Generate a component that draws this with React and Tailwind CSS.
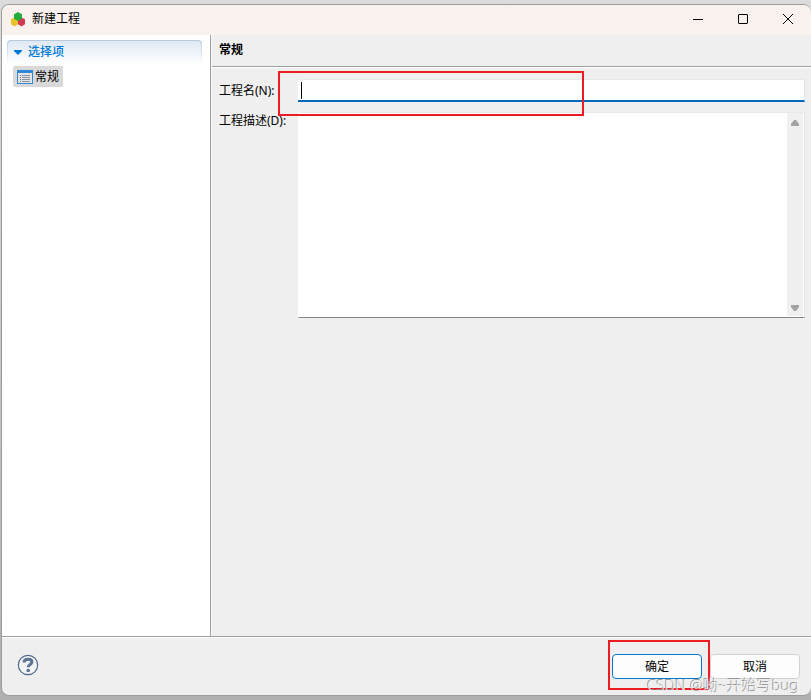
import React, { useState } from 'react'

const App = () => {
  return (
    <div className="flex h-screen min-h-96 flex-col bg-gradient-to-b from-[#dcdcdc] to-[#b0b0b0] pt-1 pb-1 pl-px font-['Noto_Sans','Noto_Sans_CJK_SC',sans-serif] text-xs text-black">
      <div className="flex flex-1 flex-col overflow-hidden rounded-lg border border-r-0 border-[#9c9c9c] bg-[#efefef]">
        <TitleBar title="新建工程" />
        <div className="flex flex-1">
          <Sidebar />
          <GeneralForm />
        </div>
        <Footer />
      </div>
    </div>
  )
}

export default App

const TitleBar = ({ title }) => {
  return (
    <header className="flex h-[30px] items-center bg-[#f9f1ee] pb-0.5 pl-2">
      <svg className="h-4 w-4" viewBox="0 0 16 16" aria-hidden="true">
        <path d="M4.500 6.500L8 8.200v5L4.500 15.500 1 13.200v-5z" fill="#e8c02a" />
        <path d="M11.500 6.500L15 8.200v5l-3.500 2.300L8 13.200v-5z" fill="#d23b51" />
        <path d="M8 1l4 2.200v4.600L8 10 4 7.800V3.200z" fill="#22ad3c" />
      </svg>
      <h1 className="ml-1.5 flex-1 leading-4">{title}</h1>
      <button aria-label="最小化" className="flex h-full w-[45px] items-center justify-center">
        <svg className="h-3 w-3" viewBox="0 0 12 12" stroke="#000">
          <path d="M1 6.500h10" />
        </svg>
      </button>
      <button aria-label="最大化" className="flex h-full w-[45px] items-center justify-center">
        <svg className="h-3 w-3" viewBox="0 0 12 12" fill="none" stroke="#000">
          <rect x="1.500" y="1.500" width="9" height="9" rx="0.500" />
        </svg>
      </button>
      <button aria-label="关闭" className="flex h-full w-[46px] items-center justify-center">
        <svg className="h-3 w-3" viewBox="0 0 12 12" stroke="#000">
          <path d="M1 1l10 10M11 1L1 11" />
        </svg>
      </button>
    </header>
  )
}

const Sidebar = () => {
  const [open, setOpen] = useState(true)
  return (
    <nav className="w-[209px] border-r border-[#a0a0a0] bg-white px-[5px] pt-[5px]">
      <div className="mr-[3px] rounded-t bg-gradient-to-b from-[#b5c8dc] to-white p-px">
        <button
          onClick={() => setOpen(!open)}
          className="flex h-[23px] w-full items-center rounded-t-sm bg-gradient-to-b from-[#dfe8f3] to-white pb-0.5 pl-1.5 text-[#0078d7]"
        >
          <svg className="h-2 w-2" viewBox="0 0 8 8" fill="#0078d7">
            <path d="M0 2h8v1L4 7 0 3z" />
          </svg>
          <span className="ml-1.5 font-medium leading-4">选择项</span>
        </button>
      </div>
      {open && (
        <button className="mt-px ml-1.5 flex h-[21px] w-[50px] items-center rounded-xs bg-[#d9d9d9] pl-1">
          <svg className="h-4 w-4 shrink-0" viewBox="0 0 16 16" aria-hidden="true">
            <rect x="0.500" y="1.500" width="15" height="13" fill="#e4e4e4" stroke="#2f87d8" />
            <path d="M0 1h16v3H0z" fill="#2f87d8" />
            <path d="M3 6.500h1M3 8.500h1M3 10.500h1M3 12.500h1" stroke="#68788a" />
            <path d="M5 6.500h8M5 8.500h8M5 10.500h8M5 12.500h8" stroke="#8795a3" />
          </svg>
          <span className="ml-0.5 shrink-0 leading-4">常规</span>
        </button>
      )}
    </nav>
  )
}

const GeneralForm = () => {
  return (
    <main className="flex-1 border-l border-[#f8f8f8]">
      <div className="flex h-8 items-center border-b border-[#a0a0a0] pb-0.5 pl-[7px]">
        <h2 className="font-bold leading-4">常规</h2>
      </div>
      <div className="border-t border-white pt-[11px] pr-1.5 pl-[7px]">
        <div className="relative flex">
          <label htmlFor="name" className="w-[79px] shrink-0 pt-1 leading-4">
            工程名(N):
          </label>
          <input
            id="name"
            type="text"
            className="h-[23px] min-w-0 flex-1 border-t border-r border-b-2 border-t-[#e8e8e8] border-r-[#dfe5ec] border-b-[#0067c0] bg-white px-1 outline-none"
          />
          <span className="absolute top-[3px] left-[82px] h-[17px] w-px bg-black"></span>
          <Highlight className="-top-2 left-[59px] h-[45px] w-[306px]" />
        </div>
        <div className="mt-2.5 flex">
          <label htmlFor="description" className="w-[79px] shrink-0 pt-px leading-4 whitespace-nowrap">
            工程描述(D):
          </label>
          <div className="flex h-[206px] min-w-0 flex-1 border border-t-[#e8e8e8] border-r-[#e4e4e4] border-b-[#868686] border-l-white bg-white">
            <textarea
              id="description"
              className="min-w-0 flex-1 resize-none bg-white p-1 outline-none"
            />
            <div className="mr-px mb-px flex w-4 flex-col items-center justify-between bg-[#f0f0f0] pt-1.5 pb-1">
              <button aria-label="向上滚动">
                <svg className="block h-2 w-2" viewBox="0 0 8 8" fill="#a3a3a3">
                  <path d="M3 1h2l3 4v2H0V5z" />
                </svg>
              </button>
              <button aria-label="向下滚动">
                <svg className="block h-2 w-2" viewBox="0 0 8 8" fill="#a3a3a3">
                  <path d="M0 1h8v2L5 7H3L0 3z" />
                </svg>
              </button>
            </div>
          </div>
        </div>
      </div>
    </main>
  )
}

const Footer = () => {
  return (
    <footer className="relative border-t border-[#a0a0a0]">
      <div className="flex h-[58px] items-center border-t border-white pr-[11px] pl-[15px]">
        <button aria-label="帮助" className="pb-1">
          <svg className="block h-[22px] w-[22px]" viewBox="0 0 22 22" fill="none">
            <circle cx="11" cy="11" r="9.700" fill="#f4f4f4" stroke="#566a8c" strokeWidth="1.200" />
            <path
              d="M7 8.400C7 6 8.700 5.200 11 5.200s3.900 1 3.900 2.900c0 2.500-3.700 2.300-3.700 5.200"
              stroke="#5b7196"
              strokeWidth="3"
            />
            <circle cx="11.200" cy="16.500" r="1.800" fill="#5b7196" />
          </svg>
        </button>
        <div className="relative ml-auto flex gap-2">
          <button className="h-[25px] w-[90px] rounded border border-[#0078d4] bg-[#fdfdfd] leading-4">
            确定
          </button>
          <button className="h-[25px] w-[90px] rounded border border-[#d2d2d2] bg-[#fdfdfd] leading-4">
            取消
          </button>
          <Highlight className="-top-[14px] -left-1 h-[50px] w-[102px]" />
        </div>
      </div>
      <p className="pointer-events-none absolute right-3 bottom-0 text-[15px] leading-5 font-light whitespace-nowrap text-[#f0f0f0] [text-shadow:-1px_-1px_0_#8c8c8c]">
        CSDN @呦~开始写bug
      </p>
    </footer>
  )
}

const Highlight = ({ className }) => {
  return (
    <div className={`pointer-events-none absolute border-2 border-[#ed1c24] ${className}`}></div>
  )
}
